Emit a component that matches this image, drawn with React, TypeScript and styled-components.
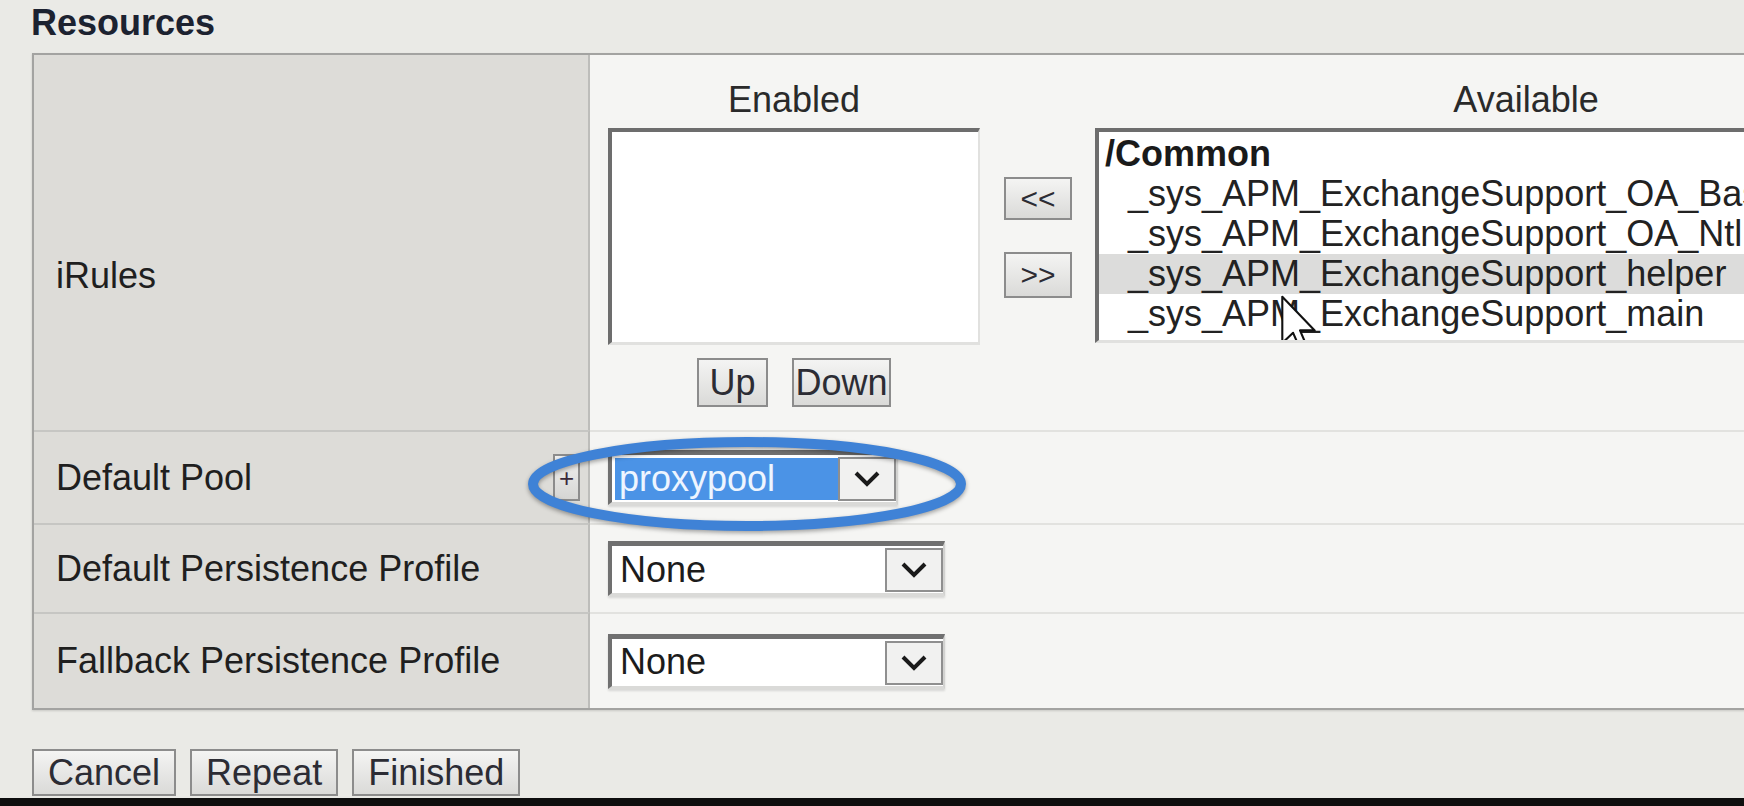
import styled, { createGlobalStyle } from "styled-components";

const GlobalStyle = createGlobalStyle`
  html, body {
    margin: 0;
    padding: 0;
  }
  body {
    background: #eaeae6;
    font-family: "Liberation Sans", Arial, sans-serif;
    overflow: hidden;
  }
`;

const Page = styled.div`
  position: relative;
  width: 1744px;
  height: 806px;
  display: flex;
  flex-direction: column;
  overflow: hidden;
`;

const Content = styled.div`
  flex: 1;
  padding: 3px 0 0 32px;
`;

const Title = styled.h2`
  margin: 0 0 10px -1px;
  font-size: 36px;
  line-height: 40px;
  font-weight: bold;
  color: #1c2230;
`;

const Table = styled.div`
  width: 2000px;
  display: grid;
  grid-template-columns: 556px 1fr;
  border: 2px solid #a3a3a1;
  border-right: none;
  box-shadow: 0 1px 2px rgba(0, 0, 0, 0.15);
`;

const LabelCell = styled.div<{ $height: number; $first?: boolean; $offset?: number }>`
  height: ${(p) => p.$height}px;
  box-sizing: border-box;
  background: #dddcd8;
  border-right: 2px solid #bdbdba;
  border-top: ${(p) => (p.$first ? "none" : "2px solid #c6c6c3")};
  display: flex;
  align-items: center;
  justify-content: space-between;
  padding: ${(p) => p.$offset ?? 0}px 8px 0 22px;
  font-size: 36px;
  line-height: 40px;
  color: #1f1f1f;
`;

const ValueCell = styled.div<{ $height: number; $first?: boolean }>`
  height: ${(p) => p.$height}px;
  box-sizing: border-box;
  background: #f5f5f3;
  border-top: ${(p) => (p.$first ? "none" : "2px solid #e2e2df")};
  display: flex;
  align-items: ${(p) => (p.$first ? "flex-start" : "center")};
  padding: ${(p) => (p.$first ? "25px 0 0 18px" : "0 0 0 18px")};
`;

const ListColumn = styled.div<{ $width: number }>`
  width: ${(p) => p.$width}px;
  display: flex;
  flex-direction: column;
  align-items: center;
`;

const ListHeader = styled.div`
  font-size: 36px;
  line-height: 40px;
  color: #2a2a2a;
  margin-bottom: 8px;
`;

const ListBox = styled.div<{ $height: number }>`
  position: relative;
  align-self: stretch;
  height: ${(p) => p.$height}px;
  box-sizing: border-box;
  background: #ffffff;
  border-top: 4px solid #6d6d6d;
  border-left: 4px solid #6d6d6d;
  border-right: 2px solid #e1e1df;
  border-bottom: 3px solid #e1e1df;
  padding-top: 2px;
  overflow: hidden;
`;

const GroupLabel = styled.div`
  font-size: 36px;
  line-height: 40px;
  font-weight: bold;
  color: #1a1a1a;
  padding-left: 6px;
`;

const Option = styled.div<{ $hover?: boolean }>`
  font-size: 36px;
  line-height: 40px;
  color: #222222;
  padding-left: 29px;
  white-space: nowrap;
  background: ${(p) => (p.$hover ? "#dcdcdb" : "transparent")};
`;

const ButtonRow = styled.div`
  display: flex;
  gap: 24px;
  margin-top: 13px;
`;

const MoveColumn = styled.div`
  display: flex;
  flex-direction: column;
  gap: 32px;
  margin: 97px 23px 0 24px;
`;

const Button = styled.button<{ $width?: number; $height: number; $size: number }>`
  width: ${(p) => (p.$width ? `${p.$width}px` : "auto")};
  height: ${(p) => p.$height}px;
  box-sizing: border-box;
  margin: 0;
  padding: 0 14px;
  border: 2px solid #8c8c8c;
  border-radius: 0;
  background: linear-gradient(#f4f4f3, #dadad8);
  font-family: "Liberation Sans", Arial, sans-serif;
  font-size: ${(p) => p.$size}px;
  line-height: 40px;
  color: #2c2c34;
  display: flex;
  align-items: center;
  justify-content: center;
`;

const PlusButton = styled.div`
  width: 27px;
  height: 47px;
  box-sizing: border-box;
  border: 2px solid #8c8c8c;
  background: linear-gradient(#f0f0ef, #d6d6d4);
  font-size: 26px;
  line-height: 40px;
  color: #3a2a3a;
  display: flex;
  align-items: center;
  justify-content: center;
`;

const Select = styled.div<{ $width: number }>`
  width: ${(p) => p.$width}px;
  height: 55px;
  box-sizing: border-box;
  display: flex;
  background: #ffffff;
  border-top: 5px solid #707070;
  border-left: 4px solid #707070;
  border-right: 2px solid #d2d2d0;
  border-bottom: 3px solid #dadad8;
  box-shadow: 0 2px 2px rgba(0, 0, 0, 0.12);
`;

const SelectValue = styled.div<{ $selected?: boolean }>`
  flex: 1;
  display: flex;
  align-items: center;
  margin: ${(p) => (p.$selected ? "3px 0 2px 3px" : "0")};
  padding-left: ${(p) => (p.$selected ? "4px" : "8px")};
  background: ${(p) => (p.$selected ? "#4b93e6" : "transparent")};
  color: ${(p) => (p.$selected ? "#eef5ff" : "#1c1c1c")};
  font-size: 36px;
  line-height: 40px;
`;

const SelectArrow = styled.div`
  width: 58px;
  box-sizing: border-box;
  margin: 2px 0 1px 0;
  border: 2px solid #8f8f8f;
  background: #f1f1f0;
  display: flex;
  align-items: center;
  justify-content: center;
`;

const ActionBar = styled.div`
  display: flex;
  gap: 14px;
  margin-top: 39px;
`;

const BottomStrip = styled.div`
  height: 8px;
  background: #0e0e0e;
`;

const Annotation = styled.svg`
  position: absolute;
  left: 520px;
  top: 430px;
  filter: drop-shadow(0 2px 2px rgba(0, 0, 0, 0.35));
  pointer-events: none;
`;

const Cursor = styled.svg`
  position: absolute;
  left: 181px;
  top: 163px;
`;

const Chevron = () => (
  <svg width="28" height="18" viewBox="0 0 28 18">
    <polyline points="3,3 14,14 25,3" fill="none" stroke="#1a1a1a" strokeWidth="4" />
  </svg>
);

const available = [
  "_sys_APM_ExchangeSupport_OA_BasicAuth",
  "_sys_APM_ExchangeSupport_OA_NtlmAuth",
  "_sys_APM_ExchangeSupport_helper",
  "_sys_APM_ExchangeSupport_main",
];

export default function App() {
  return (
    <Page>
      <GlobalStyle />
      <Content>
        <Title>Resources</Title>
        <Table>
          <LabelCell $height={375} $first $offset={67}>
            iRules
          </LabelCell>
          <ValueCell $height={375} $first>
            <ListColumn $width={372}>
              <ListHeader>Enabled</ListHeader>
              <ListBox $height={217} />
              <ButtonRow>
                <Button $width={71} $height={49} $size={36}>
                  Up
                </Button>
                <Button $width={99} $height={49} $size={36}>
                  Down
                </Button>
              </ButtonRow>
            </ListColumn>
            <MoveColumn>
              <Button $width={68} $height={43} $size={30}>
                &lt;&lt;
              </Button>
              <Button $width={68} $height={46} $size={30}>
                &gt;&gt;
              </Button>
            </MoveColumn>
            <ListColumn $width={862}>
              <ListHeader>Available</ListHeader>
              <ListBox $height={215}>
                <GroupLabel>/Common</GroupLabel>
                {available.map((name, i) => (
                  <Option key={name} $hover={i === 2}>
                    {name}
                  </Option>
                ))}
                <Cursor width="40" height="60" viewBox="0 0 13 20">
                  <path
                    d="M0.6 0.6 L0.6 16 L4.2 12.6 L6.8 18.6 L9 17.6 L6.5 11.8 L11.4 11.8 Z"
                    fill="#ffffff"
                    stroke="#111111"
                    strokeWidth="0.7"
                    strokeLinejoin="round"
                  />
                </Cursor>
              </ListBox>
            </ListColumn>
          </ValueCell>

          <LabelCell $height={93}>
            Default Pool
            <PlusButton>+</PlusButton>
          </LabelCell>
          <ValueCell $height={93}>
            <Select $width={290}>
              <SelectValue $selected>proxypool</SelectValue>
              <SelectArrow>
                <Chevron />
              </SelectArrow>
            </Select>
          </ValueCell>

          <LabelCell $height={89}>Default Persistence Profile</LabelCell>
          <ValueCell $height={89}>
            <Select $width={337}>
              <SelectValue>None</SelectValue>
              <SelectArrow>
                <Chevron />
              </SelectArrow>
            </Select>
          </ValueCell>

          <LabelCell $height={96}>Fallback Persistence Profile</LabelCell>
          <ValueCell $height={96}>
            <Select $width={337}>
              <SelectValue>None</SelectValue>
              <SelectArrow>
                <Chevron />
              </SelectArrow>
            </Select>
          </ValueCell>
        </Table>

        <ActionBar>
          <Button $height={47} $size={36}>
            Cancel
          </Button>
          <Button $height={47} $size={36}>
            Repeat
          </Button>
          <Button $height={47} $size={36}>
            Finished
          </Button>
        </ActionBar>
      </Content>
      <BottomStrip />

      <Annotation width="460" height="110" viewBox="0 0 460 110">
        <ellipse cx="227" cy="54" rx="214" ry="42" fill="none" stroke="#3f82d6" strokeWidth="10" />
      </Annotation>
    </Page>
  );
}
